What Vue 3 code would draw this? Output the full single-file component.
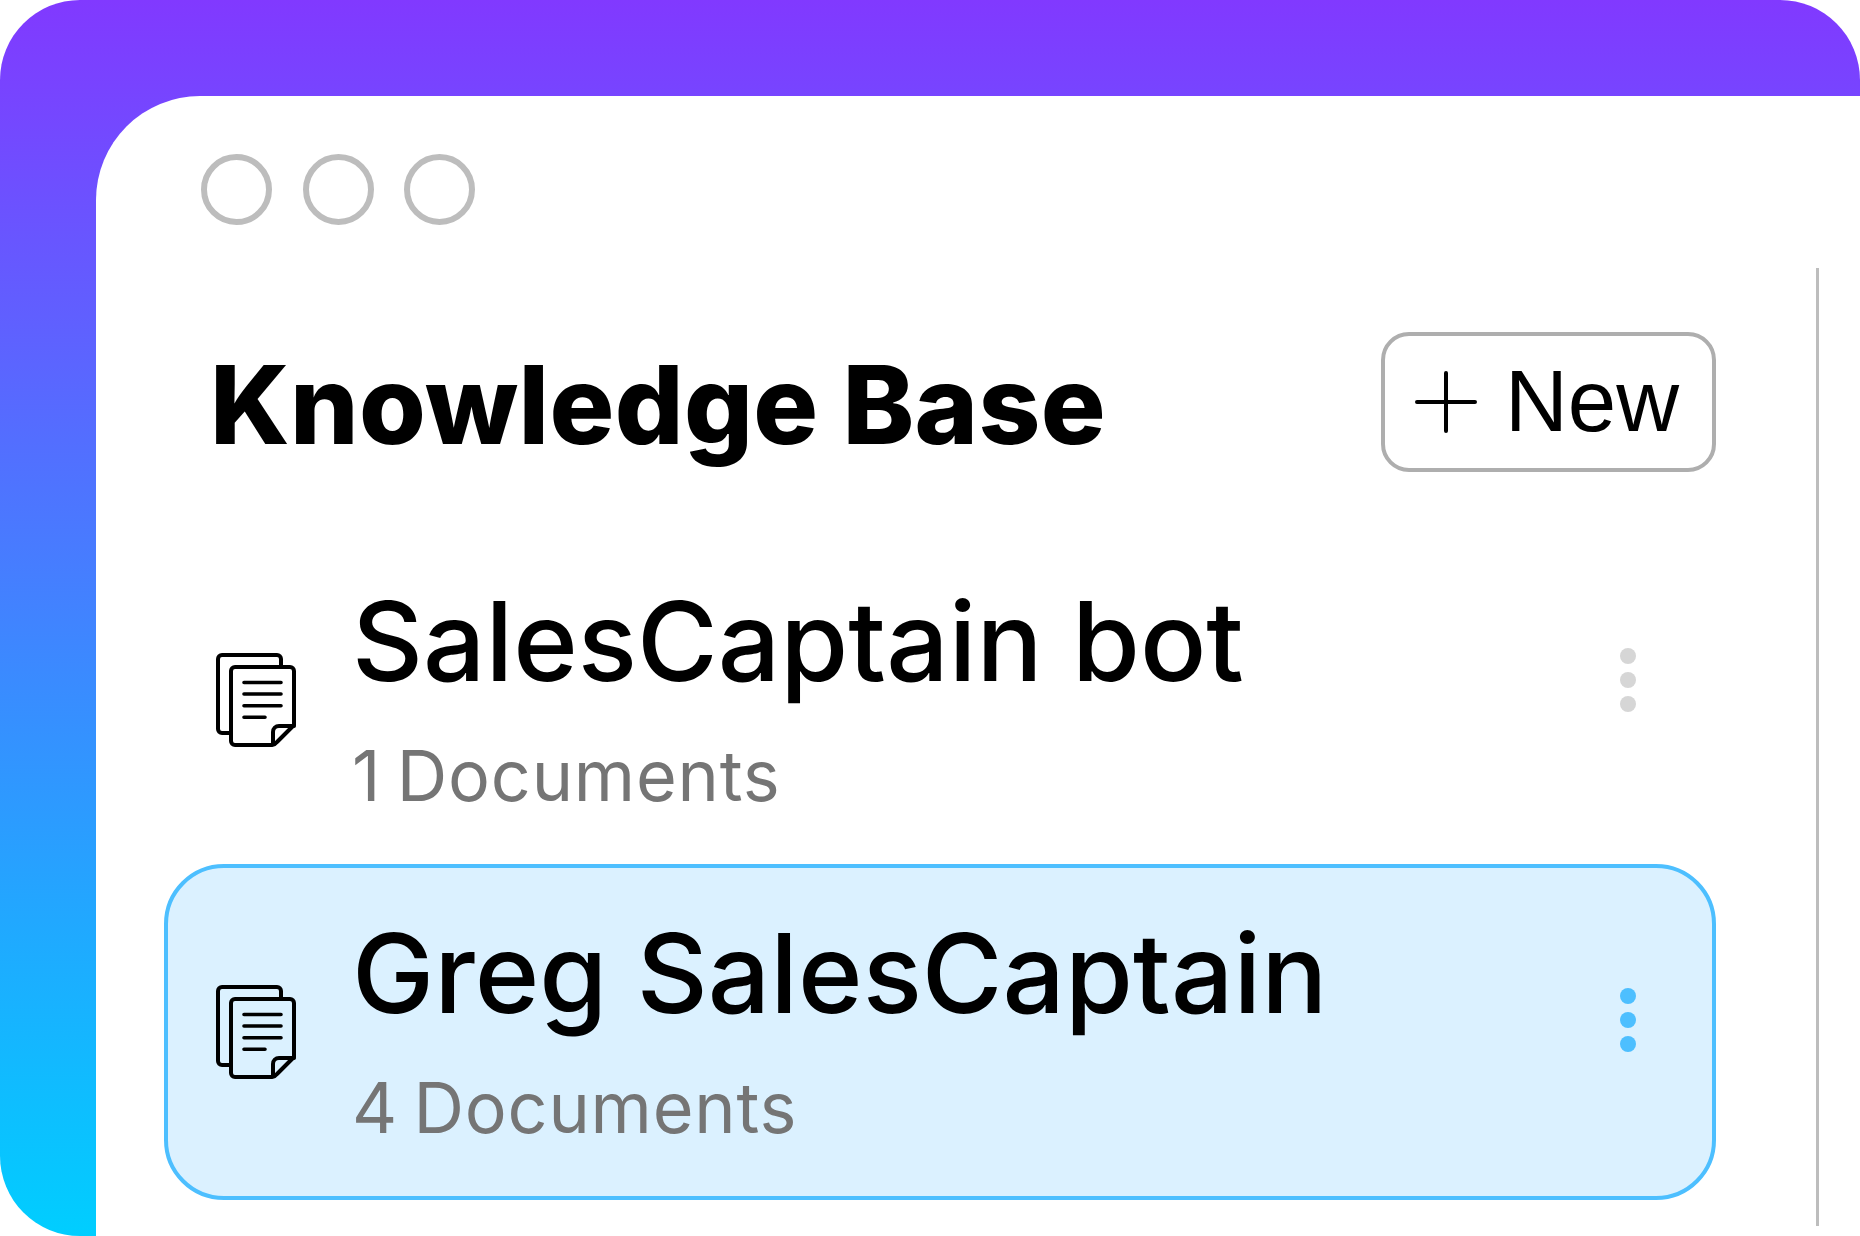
<script setup>
const rows = [
  { name: 'SalesCaptain bot', docs: '1 Documents', active: false },
  { name: 'Greg SalesCaptain', docs: '4 Documents', active: true },
]
</script>

<template>
  <div class="shell">
    <main class="window">
      <div class="lights">
        <span class="light"></span>
        <span class="light"></span>
        <span class="light"></span>
      </div>
      <section class="panel">
        <header class="head">
          <h1 class="title">Knowledge Base</h1>
          <button class="new" type="button">
            <svg class="plus" width="62" height="62" viewBox="0 0 62 62" aria-hidden="true">
              <path d="M31 2V60M2 31H60" fill="none" stroke="#000" stroke-width="4" stroke-linecap="round" />
            </svg>
            <span class="new-label">New</span>
          </button>
        </header>
        <ul class="list">
          <li v-for="row in rows" :key="row.name" class="row" :class="{ active: row.active }">
            <svg class="doc" width="80" height="94" viewBox="0 0 80 94" aria-hidden="true">
              <g fill="none" stroke="#000" stroke-width="4" stroke-linejoin="round" stroke-linecap="round">
                <path d="M15 80H6a4 4 0 0 1-4-4V6a4 4 0 0 1 4-4h55a4 4 0 0 1 4 4v8" />
                <path d="M19 14h55a4 4 0 0 1 4 4v54L61 89a8 8 0 0 1-5 3H19a4 4 0 0 1-4-4V18a4 4 0 0 1 4-4z" />
                <path d="M57 91V79a6 6 0 0 1 6-6h15" />
                <path d="M28 29.5H65M28 41H65M28 52.7H65M28 64.3H49" stroke-width="3.6" />
              </g>
            </svg>
            <div class="text">
              <div class="name">{{ row.name }}</div>
              <div class="docs">{{ row.docs }}</div>
            </div>
            <div class="kebab">
              <i></i><i></i><i></i>
            </div>
          </li>
        </ul>
      </section>
    </main>
  </div>
</template>

<style>
html, body { margin: 0; background: #fff; }
</style>

<style scoped>
.shell {
  width: 1860px;
  height: 1236px;
  box-sizing: border-box;
  padding: 96px 0 0 96px;
  border-radius: 80px 80px 0 80px;
  background: linear-gradient(180deg, #8139ff 0%, #00ceff 100%);
  overflow: hidden;
  font-family: Inter, "Liberation Sans", sans-serif;
  color: #000;
}
.window {
  height: 1140px;
  background: #fff;
  border-top-left-radius: 104px;
  box-shadow: 100px 100px 0 #fff;
}
.lights {
  display: flex;
  gap: 30.6px;
  padding: 58px 0 0 105px;
  height: 71px;
}
.light {
  width: 71px;
  height: 71px;
  box-sizing: border-box;
  border: 6px solid #bdbdbd;
  border-radius: 50%;
}
.panel {
  box-sizing: border-box;
  width: 1723px;
  height: 958px;
  margin-top: 43px;
  padding: 64px 100px 0 68px;
  border-right: 3px solid #bdbdbd;
}
.head {
  display: flex;
  justify-content: space-between;
  align-items: center;
  height: 140px;
}
.title {
  margin: 5px 0 0 46px;
  font-size: 108px;
  font-weight: 800;
  letter-spacing: 0.35px;
  line-height: 1;
}
.new {
  box-sizing: border-box;
  width: 335px;
  height: 140px;
  display: flex;
  align-items: center;
  gap: 28px;
  padding: 0 0 0 30px;
  border: 4px solid #aeaeae;
  border-radius: 28px;
  background: #fff;
  color: #000;
  font-family: "Liberation Sans", Arial, sans-serif;
  font-size: 87px;
  line-height: 1;
}
.new-label { margin-top: -3px; }
.list {
  list-style: none;
  margin: 60px 0 0;
  padding: 0;
}
.row {
  box-sizing: border-box;
  height: 336px;
  display: flex;
  align-items: center;
  padding: 0 76px 0 48px;
  border: 4px solid transparent;
  border-radius: 60px;
}
.row + .row { margin-top: -4px; }
.row.active {
  background: #dbf1ff;
  border-color: #4dbfff;
}
.doc { flex: none; }
.text {
  flex: 1;
  margin-left: 56px;
  margin-top: -2px;
}
.name {
  font-size: 110px;
  font-weight: 450;
  line-height: 126px;
  white-space: nowrap;
}
.docs {
  margin-top: 28px;
  font-size: 70px;
  line-height: 88px;
  letter-spacing: 0.8px;
  word-spacing: -5px;
  color: #757575;
}
.kebab {
  display: flex;
  flex-direction: column;
  gap: 8px;
  margin-top: -40px;
}
.active .kebab { margin-top: -24px; }
.kebab i {
  display: block;
  width: 16px;
  height: 16px;
  border-radius: 50%;
  background: #d6d6d6;
}
.active .kebab i { background: #4dbfff; }
</style>
